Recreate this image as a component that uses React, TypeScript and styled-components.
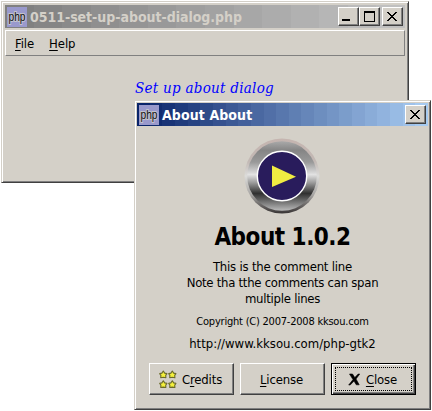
import React from "react";
import styled, { createGlobalStyle } from "styled-components";

const Global = createGlobalStyle`
  html, body { margin: 0; padding: 0; background: #fff; }
  body { width: 432px; height: 411px; overflow: hidden; }
  * { box-sizing: border-box; }
`;

const face = "#d4d0c8";
const ui = `"DejaVu Sans Condensed", "DejaVu Sans", "Noto Sans", sans-serif`;

const Desktop = styled.div`
  position: relative;
  width: 432px;
  height: 411px;
  background: #fff;
  color: #000;
  font: 13px/16px ${ui};
  font-stretch: condensed;
`;

const Frame = styled.section<{ $x: number; $y: number; $w: number; $h: number; $pad: number }>`
  position: absolute;
  left: ${(p) => p.$x}px;
  top: ${(p) => p.$y}px;
  width: ${(p) => p.$w}px;
  height: ${(p) => p.$h}px;
  padding: ${(p) => p.$pad}px;
  display: flex;
  flex-direction: column;
  background: ${face};
  border: 1px solid;
  border-color: ${face} #404040 #404040 ${face};
  box-shadow: inset 1px 1px #fff, inset -1px -1px #808080;
`;

const TitleBar = styled.header<{ $fill: string; $color: string }>`
  flex: none;
  height: 23px;
  display: flex;
  align-items: center;
  padding: 0 2px;
  background: ${(p) => p.$fill};
  color: ${(p) => p.$color};
`;

const Title = styled.h1<{ $gap?: number }>`
  flex: 1;
  margin: 0 0 0 3px;
  font: bold 14px/20px ${ui};
  font-stretch: condensed;
  letter-spacing: ${(p) => p.$gap ?? 0}px;
  white-space: nowrap;
`;

const CaptionButton = styled.button<{ $gap?: number }>`
  width: 21px;
  height: 19px;
  margin: 0 0 0 ${(p) => p.$gap ?? 0}px;
  padding: 0 1px 1px 0;
  display: grid;
  place-items: center;
  background: ${face};
  border: 1px solid;
  border-color: #fff #404040 #404040 #fff;
  box-shadow: inset -1px -1px #808080;
`;

const MenuBar = styled.nav`
  flex: none;
  height: 26px;
  margin-top: 2px;
  padding: 5px 9px;
  display: flex;
  gap: 15px;
  border: 1px solid;
  border-color: #fff #808080 #808080 #fff;
`;

const MenuItem = styled.span`
  letter-spacing: -0.1px;
`;

const Key = styled.span`
  text-decoration: underline;
  text-underline-offset: 2px;
  text-decoration-thickness: 1px;
`;

const Heading = styled.p`
  margin: 21px 0 0 130px;
  font: italic 15px/22px "DejaVu Serif Condensed", "DejaVu Serif", serif;
  font-stretch: condensed;
  letter-spacing: 0.27px;
  color: #00f;
  white-space: nowrap;
`;

const Body = styled.div`
  flex: 1;
  display: flex;
  flex-direction: column;
  align-items: center;
  padding-top: 12px;
  text-align: center;
  white-space: nowrap;
`;

const LogoArt = styled.svg`
  margin-right: 2px;
`;

const Name = styled.h2`
  margin: 8px 0 0;
  font: bold 24px/30px ${ui};
  font-stretch: condensed;
  letter-spacing: -0.5px;
`;

const Line = styled.p<{ $size?: number; $top?: number; $gap?: number }>`
  margin: ${(p) => p.$top ?? 0}px 0 0;
  font-size: ${(p) => p.$size ?? 13}px;
  line-height: 16px;
  letter-spacing: ${(p) => p.$gap ?? 0}px;
`;

const Actions = styled.footer`
  display: flex;
  gap: 6px;
  margin-top: 11px;
`;

const Action = styled.button<{ $default?: boolean }>`
  position: relative;
  width: 85px;
  height: 32px;
  padding: 1px 2px 0 0;
  display: flex;
  align-items: center;
  justify-content: center;
  gap: 5px;
  background: ${face};
  color: #000;
  font: 13px/16px ${ui};
  font-stretch: condensed;
  letter-spacing: -0.15px;
  border: 1px solid;
  border-color: ${(p) => (p.$default ? "#000" : "#fff #404040 #404040 #fff")};
  box-shadow: ${(p) =>
    p.$default
      ? "inset 1px 1px #fff, inset -1px -1px #404040, inset -2px -2px #808080"
      : "inset -1px -1px #808080"};
`;

const Focus = styled.span`
  position: absolute;
  inset: 3px;
  border: 1px dotted #000;
`;

const IconArt = styled.svg`
  flex: none;
  overflow: visible;
`;

const PhpIcon = () => (
  <IconArt width="20" height="20" viewBox="0 0 20 20">
    <rect width="20" height="20" fill="#9999cc" />
    <text x="10" y="13.5" textAnchor="middle" textLength="17" lengthAdjust="spacingAndGlyphs"
      fontFamily="Liberation Sans" fontSize="12" fill="#111" stroke="#c4c4cc" strokeWidth="2" paintOrder="stroke">php</text>
  </IconArt>
);

const CloseGlyph = () => (
  <svg width="10" height="9" shapeRendering="crispEdges">
    {[0, 1, 2, 3, 4, 5, 6, 7, 8].map((y) => (
      <path key={y} d={`M${y} ${y}h2v1h-2zM${8 - y} ${y}h2v1h-2z`} />
    ))}
  </svg>
);

const Logo = () => (
  <LogoArt width="76" height="76" viewBox="0 0 76 76">
    <defs>
      <linearGradient id="rim" x1="0" y1="0" x2="0" y2="1">
        <stop offset="0" stopColor="#c5b5b0" />
        <stop offset=".3" stopColor="#c2b8b4" />
        <stop offset=".5" stopColor="#dcdcda" />
        <stop offset=".75" stopColor="#a8a6a4" />
        <stop offset="1" stopColor="#383434" />
      </linearGradient>
      <linearGradient id="ring" x1="0" y1="0" x2="0" y2="1">
        <stop offset="0" stopColor="#aaa" />
        <stop offset=".13" stopColor="#858585" />
        <stop offset=".3" stopColor="#999" />
        <stop offset=".48" stopColor="#e2e2e2" />
        <stop offset=".6" stopColor="#999" />
        <stop offset=".75" stopColor="#303030" />
        <stop offset=".88" stopColor="#777" />
        <stop offset="1" stopColor="#bbb" />
      </linearGradient>
    </defs>
    <circle cx="38" cy="38" r="37.5" fill="url(#rim)" />
    <circle cx="38" cy="38" r="34.8" fill="url(#ring)" />
    <circle cx="38" cy="38" r="24.7" fill="#291c5c" stroke="#fff" strokeWidth="1.4" />
    <path d="M28 27.5L52 38.7 28 49z" fill="#f0ec42" />
  </LogoArt>
);

const Stars = () => (
  <svg width="18" height="19" viewBox="0 0 18 19">
    {[[4.3, 4.6], [13.3, 4.6], [4.3, 14.4], [13.3, 14.4]].map(([x, y]) => (
      <path key={`${x}-${y}`} transform={`translate(${x} ${y})`}
        d="M0-3.6L1.4-1.5 3.6-1 2.4.8 2.6 3.1 0 2.7-2.6 3.1-2.4.8-3.6-1-1.4-1.5z"
        fill="#f4f03c" stroke="#6a6a2c" strokeWidth="1.1" strokeLinejoin="round" />
    ))}
  </svg>
);

const Cross = () => (
  <svg width="13" height="13" viewBox="0 0 13 13">
    <path d="M1.5 1h3L6.8 4.6 10.2 1h1.5L8 6l3.2 5.8H8.3L6 8 2.2 12H.7L5 6.6z" stroke="#000" strokeWidth=".6" />
  </svg>
);

type RGB = [number, number, number];

// Caption gradients on a limited palette show as discrete vertical bands.
const bands = (from: RGB, to: RGB, count: number) => {
  const stops = Array.from({ length: count }, (_, i) => {
    const t = i / (count - 1);
    const c = from.map((v, k) => Math.round(v + (to[k] - v) * t)).join(",");
    return `rgb(${c}) ${(i / count) * 100}% ${((i + 1) / count) * 100}%`;
  });
  return `linear-gradient(90deg,${stops.join(",")})`;
};

const grays = bands([128, 128, 128], [192, 192, 192], 14);
const blues = bands([10, 36, 106], [166, 202, 240], 23);

export default function App() {
  return (
    <Desktop>
      <Global />
      <Frame $x={1} $y={1} $w={408} $h={182} $pad={3}>
        <TitleBar $fill={grays} $color={face}>
          <PhpIcon />
          <Title $gap={-0.03}>0511-set-up-about-dialog.php</Title>
          <CaptionButton>
            <svg width="12" height="10" shapeRendering="crispEdges"><path d="M0 8h8v2H0z" /></svg>
          </CaptionButton>
          <CaptionButton>
            <svg width="11" height="11" shapeRendering="crispEdges"><path d="M0 0h11v11H0zM1 2v8h9V2z" fillRule="evenodd" /></svg>
          </CaptionButton>
          <CaptionButton $gap={2}><CloseGlyph /></CaptionButton>
        </TitleBar>
        <MenuBar>
          <MenuItem><Key>F</Key>ile</MenuItem>
          <MenuItem><Key>H</Key>elp</MenuItem>
        </MenuBar>
        <Heading>Set up about dialog</Heading>
      </Frame>
      <Frame $x={134} $y={100} $w={297} $h={310} $pad={2}>
        <TitleBar $fill={blues} $color="#fff">
          <PhpIcon />
          <Title $gap={0.1}>About About</Title>
          <CaptionButton><CloseGlyph /></CaptionButton>
        </TitleBar>
        <Body>
          <Logo />
          <Name>About 1.0.2</Name>
          <Line $top={7} $gap={-0.2}>This is the comment line</Line>
          <Line $gap={-0.27}>Note tha tthe comments can span</Line>
          <Line $gap={-0.25}>multiple lines</Line>
          <Line $size={11} $top={7} $gap={-0.22}>Copyright (C) 2007-2008 kksou.com</Line>
          <Line $top={6}>http://www.kksou.com/php-gtk2</Line>
          <Actions>
            <Action><Stars /><span>C<Key>r</Key>edits</span></Action>
            <Action><span><Key>L</Key>icense</span></Action>
            <Action $default><Focus /><Cross /><span><Key>C</Key>lose</span></Action>
          </Actions>
        </Body>
      </Frame>
    </Desktop>
  );
}
